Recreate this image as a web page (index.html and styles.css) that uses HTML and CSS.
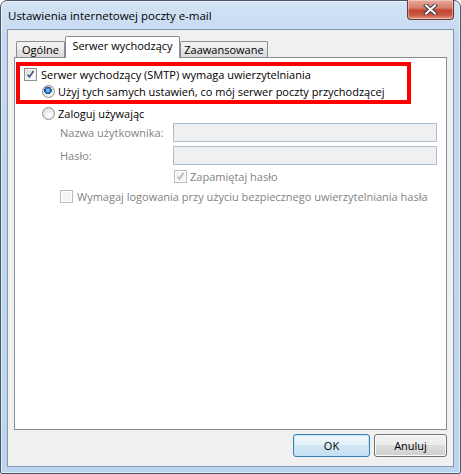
FILE: index.html
```html
<!DOCTYPE html>
<html lang="pl">
<head>
    <meta charset="UTF-8">
    <meta name="viewport" content="width=device-width, initial-scale=1.0">
    <title>Ustawienia internetowej poczty e-mail</title>
    <link rel="stylesheet" href="styles.css">
</head>
<body>
    <div class="window">
        <div class="titlebar">
            <span class="title">Ustawienia internetowej poczty e-mail</span>
            <div class="close-btn">
                <svg width="15" height="11" viewBox="0 0 15 11">
                    <path d="M3 1.5 L12 9.5 M12 1.5 L3 9.5" stroke="#3b3b4a" stroke-width="4" stroke-linecap="square"/>
                    <path d="M3 1.5 L12 9.5 M12 1.5 L3 9.5" stroke="#ffffff" stroke-width="2" stroke-linecap="square"/>
                </svg>
            </div>
        </div>
        <div class="client">
            <div class="tabs">
                <div class="tab tab-general">Ogólne</div>
                <div class="tab tab-outgoing active">Serwer wychodzący</div>
                <div class="tab tab-advanced">Zaawansowane</div>
            </div>
            <div class="panel">
                <div class="auth-box">
                    <div class="row">
                        <span class="check checked">
                            <svg width="11" height="11" viewBox="0 0 11 11"><path d="M2.5 5.5 L4.5 8 L8.5 2" fill="none" stroke="#3f5488" stroke-width="1.6"/></svg>
                        </span>
                        <span>Serwer wychodzący (SMTP) wymaga uwierzytelniania</span>
                    </div>
                    <div class="row row-radio">
                        <span class="radio selected"></span>
                        <span>Użyj tych samych ustawień, co mój serwer poczty przychodzącej</span>
                    </div>
                </div>
                <div class="row row-login">
                    <span class="radio"></span>
                    <span>Zaloguj używając</span>
                </div>
                <div class="field">
                    <span class="field-label">Nazwa użytkownika:</span>
                    <span class="textbox"></span>
                </div>
                <div class="field field-pass">
                    <span class="field-label">Hasło:</span>
                    <span class="textbox"></span>
                </div>
                <div class="row row-remember disabled">
                    <span class="check checked">
                        <svg width="11" height="11" viewBox="0 0 11 11"><path d="M2.5 5.5 L4.5 8 L8.5 2" fill="none" stroke="#b5b5b5" stroke-width="1.6"/></svg>
                    </span>
                    <span>Zapamiętaj hasło</span>
                </div>
                <div class="row row-spa disabled">
                    <span class="check"></span>
                    <span>Wymagaj logowania przy użyciu bezpiecznego uwierzytelniania hasła</span>
                </div>
            </div>
            <div class="buttons">
                <div class="btn btn-default">OK</div>
                <div class="btn">Anuluj</div>
            </div>
        </div>
    </div>
</body>
</html>
```

FILE: styles.css
```css
body {
    margin: 0;
    background-color: #ffffff;
    font-family: "Open Sans", "Noto Sans", sans-serif;
    font-size: 11px;
    color: #000;
}
.window {
    box-sizing: border-box;
    width: 461px;
    height: 474px;
    display: flex;
    flex-direction: column;
    padding: 0 6px 6px 6px;
    border: 1px solid #4a5668;
    border-radius: 7px 7px 2px 2px;
    background: linear-gradient(#d3e3f5, #c3d8f0 40px, #bdd4ee);
    box-shadow: inset 0 0 0 1px rgba(255, 255, 255, 0.55);
}
.titlebar {
    height: 28px;
    display: flex;
    align-items: center;
    padding-left: 1px;
    flex-shrink: 0;
}
.title {
    font-size: 11.5px;
}
.close-btn {
    box-sizing: border-box;
    width: 47px;
    height: 20px;
    margin-left: auto;
    align-self: flex-start;
    margin-top: -1px;
    display: flex;
    justify-content: center;
    align-items: center;
    border: 1px solid #6b3a35;
    border-top: none;
    border-radius: 0 0 4px 4px;
    background: linear-gradient(#e9a99b, #d7806f 40%, #c5452f 55%, #c75a44 80%, #e39f86);
    box-shadow: inset 0 0 0 1px rgba(255, 255, 255, 0.35);
}
.client {
    flex: 1;
    display: flex;
    flex-direction: column;
    padding: 6px 6px 0 6px;
    border: 1px solid #8497b0;
    background-color: #f0f0f0;
}
.tabs {
    display: flex;
    align-items: flex-end;
    height: 21px;
    padding-left: 2px;
}
.tab {
    box-sizing: border-box;
    height: 16px;
    display: flex;
    justify-content: center;
    align-items: center;
    border: 1px solid #898c95;
    border-bottom: none;
    border-radius: 2px 2px 0 0;
    background: linear-gradient(#f3f3f3, #ebebeb 50%, #e3e3e3 50%, #dcdcdc);
}
.tab-general {
    width: 49px;
}
.tab-outgoing {
    width: 115px;
}
.tab-advanced {
    width: 88px;
}
.tab.active {
    height: 22px;
    margin-bottom: -1px;
    padding-bottom: 5px;
    background: #ffffff;
    position: relative;
    z-index: 1;
}
.panel {
    height: 371px;
    border: 1px solid #898c95;
    background-color: #ffffff;
}
.auth-box {
    width: 383px;
    height: 34px;
    margin: 4px 0 0 1px;
    padding-left: 4px;
    border: 4px solid #ff0000;
}
.row {
    display: flex;
    align-items: center;
    height: 17px;
    gap: 4px;
    white-space: nowrap;
}
.row-radio {
    margin-left: 18px;
    gap: 3px;
}
.row-login {
    height: 18px;
    margin-left: 27px;
    gap: 3px;
}
.check {
    box-sizing: border-box;
    width: 13px;
    height: 13px;
    flex-shrink: 0;
    display: flex;
    justify-content: center;
    align-items: center;
    border: 1px solid #8e8f8f;
    background: linear-gradient(135deg, #d6d6d6, #f8f8f8 70%, #ffffff);
    box-shadow: inset 0 0 0 1px #f4f4f4;
}
.radio {
    box-sizing: border-box;
    width: 13px;
    height: 13px;
    flex-shrink: 0;
    border-radius: 50%;
    border: 1px solid #8e8f8f;
    background: radial-gradient(circle at 60% 65%, #ffffff, #e6e6e6 60%, #cfcfcf);
}
.radio.selected {
    background:
        radial-gradient(circle at 45% 40%, #bfeaff 0, #4c9ee0 1.5px, #1c5ea8 3px, #123f7c 3.6px, transparent 4px),
        radial-gradient(circle at 60% 65%, #ffffff, #e6e6e6 60%, #cfcfcf);
}
.field {
    display: flex;
    align-items: center;
    height: 19px;
    margin-top: 1px;
}
.field-pass {
    margin-top: 4px;
}
.field-label {
    box-sizing: border-box;
    width: 158px;
    padding-left: 45px;
    color: #838383;
}
.textbox {
    box-sizing: border-box;
    width: 264px;
    height: 19px;
    border: 1px solid #afbfd2;
    background-color: #f0f0f0;
}
.disabled {
    color: #838383;
}
.disabled .check {
    border-color: #bcbcbc;
    background: #f4f4f4;
    box-shadow: inset 0 0 0 1px #ffffff;
}
.row-remember {
    height: 16px;
    margin: 3px 0 0 159px;
    gap: 3px;
}
.row-spa {
    height: 16px;
    margin: 4px 0 0 45px;
}
.buttons {
    display: flex;
    justify-content: flex-end;
    gap: 4px;
    margin-top: 4px;
}
.btn {
    box-sizing: border-box;
    width: 73px;
    height: 23px;
    display: flex;
    justify-content: center;
    align-items: center;
    border: 1px solid #707070;
    border-radius: 3px;
    background: linear-gradient(#f2f2f2, #ebebeb 49%, #dddddd 50%, #cfcfcf);
    box-shadow: inset 0 0 0 1px #fcfcfc;
}
.btn-default {
    width: 77px;
    border-color: #3c7fb1;
    background: linear-gradient(#eef7fc, #e3f1fa 49%, #d3e8f5 50%, #c4def0);
    box-shadow: inset 0 0 0 1px #bfe3f8;
}
```
